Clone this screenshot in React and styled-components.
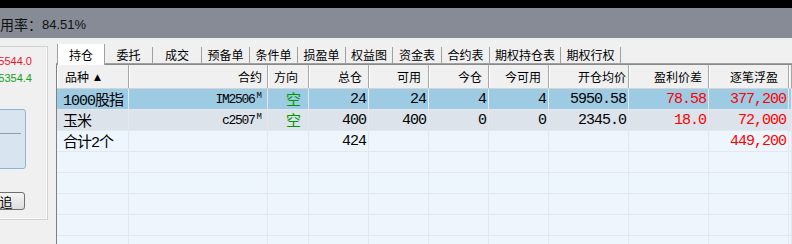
import React from "react";
import styled, { createGlobalStyle } from "styled-components";

const GRID = "72px 139px 41px 60px 60px 60px 60px 80px 80px 80px 1fr";

const tabs = [
  ["持仓", 48],
  ["委托", 48],
  ["成交", 49],
  ["预备单", 48],
  ["条件单", 48],
  ["损盈单", 48],
  ["权益图", 47],
  ["资金表", 49],
  ["合约表", 48],
  ["期权持仓表", 71],
  ["期权行权", 60],
];

const columns = [
  { title: "品种", sort: true, left: true, pl: 8 },
  { title: "合约", pr: 5 },
  { title: "方向", left: true, pl: 6 },
  { title: "总仓", pr: 6 },
  { title: "可用", pr: 7 },
  { title: "今仓", pr: 6 },
  { title: "今可用", pr: 7 },
  { title: "开仓均价", pr: 2 },
  { title: "盈利价差", pr: 6 },
  { title: "逐笔浮盈", pr: 10 },
  { title: "" },
];

const rows = [
  {
    bg: "#9ecbe4",
    name: "1000股指",
    code: "IM2506",
    dir: "空",
    total: "24",
    avail: "24",
    today: "4",
    todayAvail: "4",
    open: "5950.58",
    diff: "78.58",
    pnl: "377,200",
  },
  {
    bg: "#dde3ea",
    name: "玉米",
    code: "c2507",
    dir: "空",
    total: "400",
    avail: "400",
    today: "0",
    todayAvail: "0",
    open: "2345.0",
    diff: "18.0",
    pnl: "72,000",
  },
  { bg: "#eef6fd", name: "合计2个", total: "424", pnl: "449,200" },
];

const EMPTY_ROWS = 5;

const App = () => {
  return (
    <Page>
      <GlobalStyle />
      <TopEdge />
      <StatusBar>
        用率：<Pct>84.51%</Pct>
      </StatusBar>
      <Main>
        <LeftPanel>
          <Quote $color="#f0102a">5544.0</Quote>
          <Quote $color="#14a014" $gap={3}>
            5354.4
          </Quote>
          <InfoBox>
            <InfoLine />
          </InfoBox>
          <ChaseButton>追</ChaseButton>
        </LeftPanel>
        <RightPane>
          <TabBar>
            {tabs.map(([label, w], i) => (
              <Tab key={label} $w={w} $active={i === 0}>
                {label}
              </Tab>
            ))}
          </TabBar>
          <Table>
            <HeaderRow>
              {columns.map((c, i) => (
                <HeadCell key={i} $left={c.left} $pl={c.pl} $pr={c.pr}>
                  {c.title}
                  {c.sort && <SortArrow>▲</SortArrow>}
                </HeadCell>
              ))}
            </HeaderRow>
            {rows.map((r, i) => (
              <Row key={i} $bg={r.bg}>
                <Cell $left $pl={6}>
                  {r.name}
                </Cell>
                <Cell $small $pr={5}>
                  {r.code}
                  {r.code && <Mark>M</Mark>}
                </Cell>
                <Cell $pr={8} $color="#009a00">
                  {r.dir}
                </Cell>
                <Cell>{r.total}</Cell>
                <Cell>{r.avail}</Cell>
                <Cell>{r.today}</Cell>
                <Cell>{r.todayAvail}</Cell>
                <Cell>{r.open}</Cell>
                <Cell $color="#ff0000">{r.diff}</Cell>
                <Cell $color="#ff0000">{r.pnl}</Cell>
                <Cell />
              </Row>
            ))}
            {Array.from({ length: EMPTY_ROWS }).map((_, i) => (
              <Row key={"e" + i} $bg="#eef6fd">
                {columns.map((c, j) => (
                  <Cell key={j} />
                ))}
              </Row>
            ))}
          </Table>
        </RightPane>
      </Main>
    </Page>
  );
};

export default App;

const GlobalStyle = createGlobalStyle`
  html, body {
    margin: 0;
    padding: 0;
    overflow: hidden;
    background: #f0f0f0;
  }
`;

const Page = styled.div`
  width: 792px;
  height: 244px;
  overflow: hidden;
  display: flex;
  flex-direction: column;
  background: #f0f0f0;
  font-family: "Liberation Sans", "Noto Sans CJK SC", sans-serif;
`;

const TopEdge = styled.div`
  height: 8px;
  background: #000;
  flex-shrink: 0;
`;

const StatusBar = styled.div`
  height: 30px;
  flex-shrink: 0;
  box-sizing: border-box;
  padding-top: 2px;
  display: flex;
  align-items: center;
  background: #868b95;
  color: #111;
  font-size: 14px;
`;

const Pct = styled.span`
  font-size: 13px;
`;

const Main = styled.div`
  flex: 1;
  display: flex;
  min-height: 0;
`;

const LeftPanel = styled.div`
  width: 101px;
  height: 174px;
  margin-left: -53px;
  margin-top: 8px;
  box-sizing: border-box;
  border: 1px solid #d2d2d2;
  box-shadow: inset -1px -1px 0 #fafafa;
  display: flex;
  flex-direction: column;
  align-items: flex-end;
  flex-shrink: 0;
`;

const Quote = styled.div`
  margin-top: ${(p) => (p.$gap != null ? p.$gap : 7)}px;
  margin-right: 15px;
  font-size: 11px;
  line-height: 14px;
  color: ${(p) => p.$color};
`;

const InfoBox = styled.div`
  width: 70px;
  height: 60px;
  margin-top: 24px;
  margin-right: 21px;
  box-sizing: border-box;
  border: 1px solid #8db2de;
  border-radius: 3px;
  background: #d9e4f1;
`;

const InfoLine = styled.div`
  height: 23px;
  margin-right: 4px;
  border-bottom: 1px solid #9a9a9a;
`;

const ChaseButton = styled.div`
  width: 38px;
  height: 18px;
  margin-top: 23px;
  margin-right: 22px;
  box-sizing: border-box;
  border: 1px solid #707070;
  border-radius: 3px;
  background: linear-gradient(#f4f4f4, #dedede);
  display: flex;
  align-items: center;
  justify-content: center;
  font-family: "Noto Sans CJK SC", sans-serif;
  font-size: 13px;
  color: #000;
`;

const RightPane = styled.div`
  flex: 1;
  min-width: 0;
  margin-left: 8px;
  margin-top: 6px;
  display: flex;
  flex-direction: column;
`;

const TabBar = styled.div`
  height: 20px;
  flex-shrink: 0;
  box-sizing: border-box;
  padding-left: 1px;
  border-bottom: 1px solid #a0a0a0;
  display: flex;
  align-items: flex-start;
`;

const Tab = styled.div`
  width: ${(p) => p.$w}px;
  flex-shrink: 0;
  box-sizing: border-box;
  border-right: 1px solid #a0a0a0;
  font-family: "Noto Sans CJK SC", sans-serif;
  font-size: 12px;
  line-height: 16px;
  text-align: center;
  color: #000;
  height: ${(p) => (p.$active ? 21 : 16)}px;
  margin-top: ${(p) => (p.$active ? 0 : 3)}px;
  padding-top: ${(p) => (p.$active ? 3 : 0)}px;
  background: ${(p) => (p.$active ? "#fff" : "transparent")};
  border-left: ${(p) => (p.$active ? "1px solid #a0a0a0" : "none")};
  position: relative;
`;

const Table = styled.div`
  flex: 1;
  min-height: 0;
  overflow: hidden;
  border-left: 1px solid #808080;
  border-top: 1px solid #8a8a8a;
  background: #eef6fd;
`;

const HeaderRow = styled.div`
  display: grid;
  grid-template-columns: ${GRID};
  height: 24px;
  background: #f0f0f0;
  border-bottom: 1px solid #d4d4d4;
  box-sizing: border-box;
`;

const HeadCell = styled.div`
  display: flex;
  align-items: center;
  justify-content: ${(p) => (p.$left ? "flex-start" : "flex-end")};
  box-sizing: border-box;
  padding-left: ${(p) => p.$pl || 0}px;
  padding-right: ${(p) => p.$pr || 0}px;
  border-right: 1px solid #a8a8a8;
  box-shadow: inset 1px 0 0 #fff;
  font-family: "Noto Sans CJK SC", sans-serif;
  font-size: 12px;
  color: #000;
  white-space: nowrap;
  overflow: hidden;
`;

const SortArrow = styled.span`
  font-family: "DejaVu Sans", sans-serif;
  font-size: 9px;
  margin-left: 5px;
`;

const Row = styled.div`
  display: grid;
  grid-template-columns: ${GRID};
  height: 21px;
  background: ${(p) => p.$bg};
`;

const Cell = styled.div`
  display: flex;
  align-items: center;
  justify-content: ${(p) => (p.$left ? "flex-start" : "flex-end")};
  box-sizing: border-box;
  padding-left: ${(p) => p.$pl || 0}px;
  padding-right: ${(p) => (p.$pr != null ? p.$pr : 2)}px;
  border-right: 1px solid #e4e8ec;
  border-bottom: 1px solid #e4e8ec;
  font-family: "Liberation Mono", "Noto Sans CJK SC", monospace;
  font-size: ${(p) => (p.$small ? 13 : 15)}px;
  letter-spacing: ${(p) => (p.$small ? -1.3 : -1)}px;
  color: ${(p) => p.$color || "#000"};
  white-space: nowrap;
  overflow: hidden;
`;

const Mark = styled.span`
  align-self: flex-start;
  margin-top: 2px;
  margin-left: 2px;
  font-size: 9px;
  letter-spacing: 0;
`;
